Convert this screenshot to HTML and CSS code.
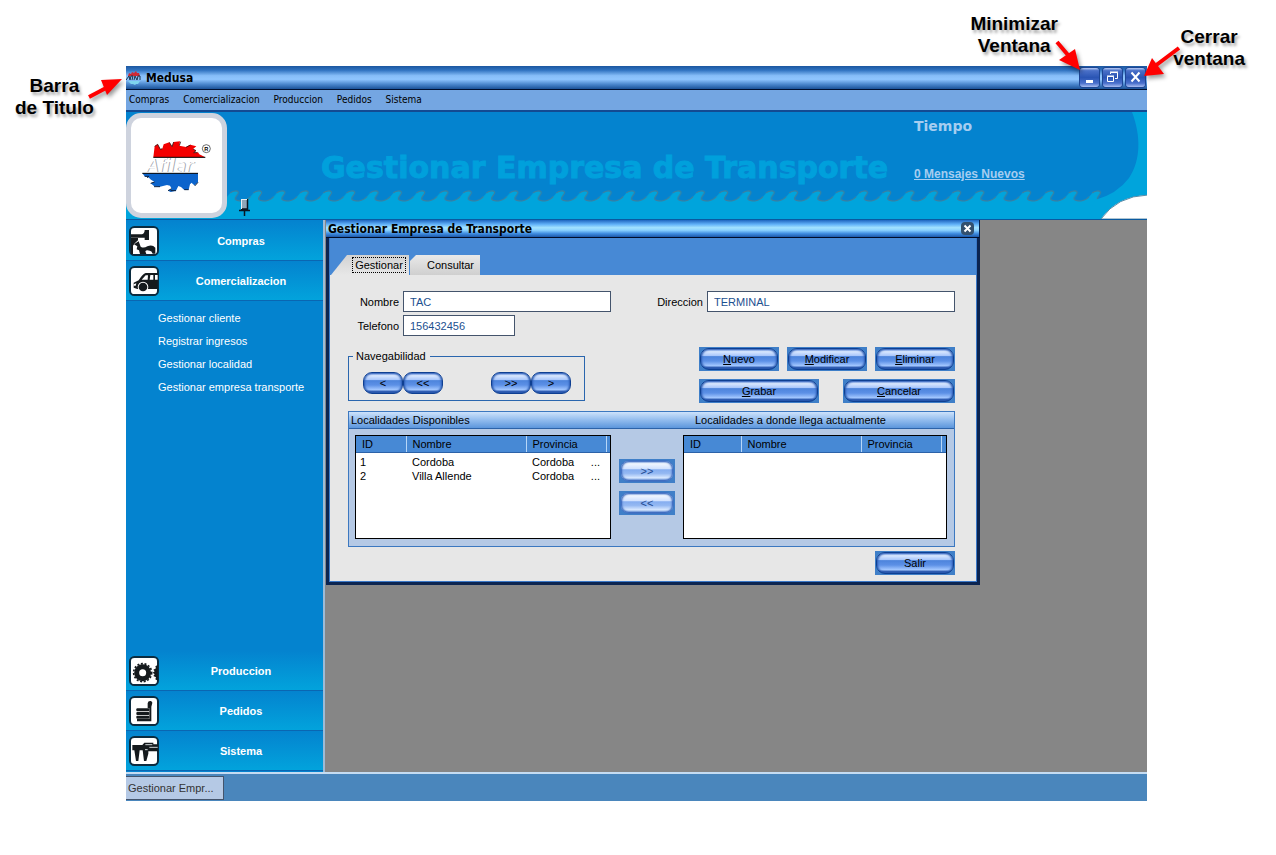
FILE: index.html
```html
<!DOCTYPE html>
<html lang="es">
<head>
<meta charset="utf-8">
<title>Medusa</title>
<link rel="stylesheet" href="styles.css">
</head>
<body>
<div class="stage">
  <div class="app">
    <header class="titlebar">
      <svg class="titlebar-icon" width="16" height="16" viewBox="0 0 16 16" aria-hidden="true">
        <path d="M2 6 3 3 5 4 6 2 8 3 10 1 11 3 13 3 14 6Z" fill="#d02a35"/>
        <path d="M0 10 3 6 4 10 5 6H7L6 10M8 10 9 6 11 10 12 6H14V10" fill="none" stroke="#1d3348"/>
        <path d="M2 11H14L12 14H10L9 15 7 14H5Z" fill="#7fd4ee"/>
      </svg>
      <h1 class="titlebar-text">Medusa</h1>
      <div class="window-buttons">
        <button class="window-button" aria-label="Minimizar"><svg width="19" height="19" viewBox="0 0 19 19"><path d="M6 12H13V15H6Z" fill="#fff"/></svg></button>
        <button class="window-button" aria-label="Restaurar"><svg width="19" height="19" viewBox="0 0 19 19" fill="none" stroke="#fff"><path d="M4.500 8.500H10.500V13.500H4.500ZM4 8H11M7.500 6V4.500H14.500V10.500H12M7 4H15"/></svg></button>
        <button class="window-button" aria-label="Cerrar"><svg width="19" height="19" viewBox="0 0 19 19" stroke="#fff" stroke-width="2"><path d="M5.500 4.500 13.500 13.500M13.500 4.500 5.500 13.500"/></svg></button>
      </div>
    </header>

    <nav class="menubar" aria-label="Principal">
      <a href="#compras">Compras</a>
      <a href="#comercializacion">Comercializacion</a>
      <a href="#produccion">Produccion</a>
      <a href="#pedidos">Pedidos</a>
      <a href="#sistema">Sistema</a>
    </nav>

    <div class="banner">
      <svg class="banner-waves" width="100%" height="29" aria-hidden="true">
        <defs>
          <pattern id="wave" width="23.300" height="29" patternUnits="userSpaceOnUse">
            <path d="M0 11C5 10 8 7 11 3C13 1 18 0 19 2C20 4 16 6 16 9C17 11 20 11 23.300 11V29H0Z" fill="#00a4dc"/>
            <path d="M11 3C13 1 18 0 19 2C20 4 16 6 16 9C17 11 20 11 23.300 11M0 11C3 10.500 6 9 8 6.500" fill="none" stroke="#3c7f9e" stroke-width="1.200"/>
          </pattern>
        </defs>
        <rect width="100%" height="29" fill="url(#wave)"/>
      </svg>
      <svg class="banner-corner" width="60" height="107" viewBox="0 0 60 107" aria-hidden="true">
        <path d="M45 0C54 24 54 48 42 66Q30 82 8 88L0 107H60V0Z" fill="#00a4dc"/>
        <path d="M14 107Q30 84 61 83V107Z" fill="#fff" stroke="#5c8ba6"/>
      </svg>
      <div class="logo">
        <svg width="74" height="56" viewBox="50 75 222 168" role="img" aria-label="Afilar">
          <path d="M90 133 94 100 103 94 111 109 117 107 121 94 138 88 146 101 151 87 170 85 168 98 188 102 201 95 219 100 209 108 218 113 211 119 224 118 228 124 246 133Z" fill="#f40000"/>
          <path d="M94 100 103 94 111 109 117 107M138 88 146 101 151 87M168 98 172 86M188 103 201 96M209 108 218 113 211 119 222 119" fill="none" stroke="#351010" stroke-width="2.500"/>
          <path d="M57 181H224L224 208 214 217 209 214 205 209 200 214 196 230 183 231 173 222 165 219 158 233 142 237 134 233 145 227 140 218 131 216 110 221 92 219 82 211 94 207 83 200 75 193 64 190Z" fill="#0c64cc"/>
          <path d="M64 190H77L71 194M82 211 94 207M110 221H92M134 233 145 227M158 233H142M196 230H183M224 208 214 219" fill="none" stroke="#0b2140" stroke-width="3"/>
          <text class="logo-shadow" x="72" y="178">Afilar</text>
          <text class="logo-name" x="69" y="176">Afilar</text>
          <path d="M90 133H246M57 181H224" stroke="#000" stroke-width="3"/>
          <circle cx="249" cy="107" r="12" fill="none" stroke="#222" stroke-width="2"/>
          <text class="logo-mark" x="243" y="113">R</text>
        </svg>
      </div>
      <svg class="pin" width="12" height="17" viewBox="0 0 12 17" aria-hidden="true">
        <path d="M2 1H9V10H2Z" fill="#8fa7b8"/><path d="M8.500 0V11M0 11.500H11M5.500 11V17M2 10H9" stroke="#0a1620" stroke-width="1.500"/><path d="M2.500 1V10M2 .5H8" stroke="#e8eef2"/>
      </svg>
      <h2 class="banner-title">Gestionar Empresa de Transporte</h2>
      <div class="banner-side">
        <p class="weather">Tiempo</p>
        <a class="messages" href="#mensajes">0 Mensajes Nuevos</a>
      </div>
    </div>

    <main class="workspace">
      <aside class="sidebar">
        <button class="section">
          <svg class="section-icon" viewBox="0 0 90 90" aria-hidden="true"><rect x="3" y="3" width="84" height="84" rx="13" fill="#fff" stroke="#0b2c40" stroke-width="6"/><path d="M6 25H39Q47 22 47 12H60V42H47V35H6Z" fill="#151a1d"/><path d="M6 36H27V43L18 51 12 59V84H6Z" fill="#151a1d"/><path d="M15 55 29 46 35 62Q44 68 55 61Q70 55 79 65V83H71Q68 74 62 74Q52 70 49 76L52 84H33L30 73 23 70 25 61Z" fill="#151a1d"/></svg>
          <span class="section-name">Compras</span>
        </button>
        <button class="section">
          <svg class="section-icon" viewBox="0 0 90 90" aria-hidden="true"><rect x="3" y="3" width="84" height="84" rx="13" fill="#fff" stroke="#0b2c40" stroke-width="6"/><path d="M86 21H50Q41 23 29 43L14 50V65L25 69H86Z" fill="#151a1d"/><path d="M50 28H57L56 41H38ZM64 27H73V41H62ZM78 27H86V41H78Z" fill="#fff"/><circle cx="42" cy="63" r="16" fill="#fff"/><circle cx="42" cy="63" r="13" fill="#151a1d"/><path d="M14 55 22 52 20 59H14Z" fill="#fff"/></svg>
          <span class="section-name">Comercializacion</span>
        </button>
        <nav class="links" aria-label="Comercializacion">
          <a href="#cliente">Gestionar cliente</a>
          <a href="#ingresos">Registrar ingresos</a>
          <a href="#localidad">Gestionar localidad</a>
          <a href="#transporte">Gestionar empresa transporte</a>
        </nav>
        <button class="section">
          <svg class="section-icon" viewBox="0 0 90 90" aria-hidden="true"><rect x="3" y="3" width="84" height="84" rx="13" fill="#fff" stroke="#0b2c40" stroke-width="6"/><circle cx="41" cy="50" r="18" fill="none" stroke="#151a1d" stroke-width="15"/><circle cx="41" cy="50" r="27" fill="none" stroke="#151a1d" stroke-width="5" stroke-dasharray="6 5"/><path d="M86 27 79 31 81 37 73 41 77 46 71 50 77 55 73 60 81 64 79 70 86 74Z" fill="#151a1d"/></svg>
          <span class="section-name">Produccion</span>
        </button>
        <button class="section">
          <svg class="section-icon" viewBox="0 0 90 90" aria-hidden="true"><rect x="3" y="3" width="84" height="84" rx="13" fill="#fff" stroke="#0b2c40" stroke-width="6"/><rect x="22" y="37" width="39" height="9" rx="3" fill="#151a1d"/><rect x="22" y="48" width="39" height="9" rx="3" fill="#151a1d"/><rect x="22" y="59" width="39" height="9" rx="3" fill="#151a1d"/><path d="M56 37V22Q57 14 65 15Q72 17 69 25L67 32V76H24V69H61V37Z" fill="#151a1d"/></svg>
          <span class="section-name">Pedidos</span>
        </button>
        <button class="section">
          <svg class="section-icon" viewBox="0 0 90 90" aria-hidden="true"><rect x="3" y="3" width="84" height="84" rx="13" fill="#fff" stroke="#0b2c40" stroke-width="6"/><path d="M10 27H40L46 20H73V25H86V46H58V53L52 75H45L41 43H32L28 75H21L16 43H10Z" fill="#151a1d"/><path d="M49 26H70M61 34H86M48 41H56" stroke="#cfd5d8" stroke-width="3"/></svg>
          <span class="section-name">Sistema</span>
        </button>
      </aside>

      <div class="desktop">
        <section class="child" aria-labelledby="child-title">
          <header class="child-bar">
            <h3 class="child-title" id="child-title">Gestionar Empresa de Transporte</h3>
            <button class="child-close" aria-label="Cerrar"><svg width="13" height="13" viewBox="0 0 13 13"><path d="M3.500 3.500 9.500 9.500M9.500 3.500 3.500 9.500" stroke="#fff" stroke-width="2"/></svg></button>
          </header>
          <div class="child-frame">
            <div class="tabs" role="tablist">
              <button class="tab tab-active" role="tab" aria-selected="true"><span class="tab-focus">Gestionar</span></button>
              <button class="tab" role="tab" aria-selected="false">Consultar</button>
            </div>
            <form class="form">
              <div class="fields">
                <label class="label" for="nombre">Nombre</label>
                <input class="input" id="nombre" value="TAC">
                <label class="label" for="direccion">Direccion</label>
                <input class="input" id="direccion" value="TERMINAL">
                <label class="label" for="telefono">Telefono</label>
                <input class="input input-short" id="telefono" value="156432456">
              </div>

              <div class="tools">
                <fieldset class="navigator">
                  <legend>Navegabilidad</legend>
                  <div class="navigator-row">
                    <div class="pair"><button type="button" class="pill">&lt;</button><button type="button" class="pill">&lt;&lt;</button></div>
                    <div class="pair"><button type="button" class="pill">&gt;&gt;</button><button type="button" class="pill">&gt;</button></div>
                  </div>
                </fieldset>
                <div class="actions">
                  <div class="actions-row">
                    <button type="button" class="button"><span class="pill"><span><u>N</u>uevo</span></span></button>
                    <button type="button" class="button"><span class="pill"><span><u>M</u>odificar</span></span></button>
                    <button type="button" class="button"><span class="pill"><span><u>E</u>liminar</span></span></button>
                  </div>
                  <div class="actions-row">
                    <button type="button" class="button button-wide"><span class="pill"><span><u>G</u>rabar</span></span></button>
                    <button type="button" class="button button-medium"><span class="pill"><span><u>C</u>ancelar</span></span></button>
                  </div>
                </div>
              </div>

              <section class="places">
                <header class="places-bar">
                  <h4>Localidades Disponibles</h4>
                  <h4>Localidades a donde llega actualmente</h4>
                </header>
                <div class="places-body">
                  <div class="list">
                    <table>
                      <colgroup><col class="col-id"><col class="col-name"><col class="col-province"><col></colgroup>
                      <thead><tr><th>ID</th><th>Nombre</th><th>Provincia</th><th></th></tr></thead>
                      <tbody>
                        <tr><td>1</td><td>Cordoba</td><td><span class="cell-cut">Cordoba<span>...</span></span></td><td></td></tr>
                        <tr><td>2</td><td>Villa Allende</td><td><span class="cell-cut">Cordoba<span>...</span></span></td><td></td></tr>
                      </tbody>
                    </table>
                  </div>
                  <div class="transfer">
                    <button type="button" class="button button-small" disabled><span class="pill">&gt;&gt;</span></button>
                    <button type="button" class="button button-small" disabled><span class="pill">&lt;&lt;</span></button>
                  </div>
                  <div class="list">
                    <table>
                      <colgroup><col class="col-id-wide"><col class="col-name"><col class="col-province"><col></colgroup>
                      <thead><tr><th>ID</th><th>Nombre</th><th>Provincia</th><th></th></tr></thead>
                    </table>
                  </div>
                </div>
              </section>

              <div class="footer">
                <button type="button" class="button"><span class="pill">Salir</span></button>
              </div>
            </form>
          </div>
        </section>
      </div>
    </main>

    <footer class="taskbar">
      <button class="task">Gestionar Empr...</button>
    </footer>
  </div>

  <p class="note note-title">Barra<br>de Titulo</p>
  <p class="note note-minimize">Minimizar<br>Ventana</p>
  <p class="note note-close">Cerrar<br>ventana</p>
  <svg class="arrow arrow-title" width="40" height="24" viewBox="0 0 40 24" aria-hidden="true"><path d="M3 20 22 10" stroke="#f00" stroke-width="4"/><path d="M36 2 15 3 21 18Z" fill="#f00"/></svg>
  <svg class="arrow arrow-buttons" width="130" height="40" viewBox="0 0 130 40" aria-hidden="true"><path d="M7 2 18 15M129 8 105 26" stroke="#f00" stroke-width="4"/><path d="M30 30 9 20 25 9ZM94 36 102 18 114 34Z" fill="#f00"/></svg>
</div>
</body>
</html>
```
FILE: styles.css
```css
* {
  box-sizing: border-box;
}

body {
  margin: 0;
  background: #fff;
  color: #000;
  font: 11px/14px "Liberation Sans", Arial, sans-serif;
}

h1, h2, h3, h4, p {
  margin: 0;
}

button, input {
  font: inherit;
  color: inherit;
}

button {
  padding: 0;
  border: 0;
  background: none;
}

.stage {
  position: relative;
  min-height: 100vh;
  padding: 66px 129px 54px 126px;
}

.app {
  display: flex;
  flex-direction: column;
  min-height: calc(100vh - 120px);
}

/* Main window bars */

.titlebar {
  display: flex;
  align-items: center;
  height: 24px;
  padding-right: 2px;
  border-bottom: 1px solid #001030;
  background: linear-gradient(#1c57a0, #2f72c0 18%, #86bdf8 42%, #8fc5fe 58%, #4a86cc 80%, #1b5298);
}

.titlebar-icon {
  margin-right: 4px;
}

.titlebar-text {
  font: bold 12px/16px "DejaVu Sans Condensed", "DejaVu Sans", sans-serif;
}

.window-buttons {
  display: flex;
  gap: 4px;
  margin-left: auto;
}

.window-button {
  width: 19px;
  height: 19px;
  border-radius: 3px;
  background: linear-gradient(#b9cdf6, #4a70c8 14%, #2a55b4 50%, #4a70cc 80%, #a9bdf0);
  box-shadow: 0 0 0 1px #1d4694;
}

.window-button svg {
  display: block;
}

.menubar {
  display: flex;
  align-items: center;
  gap: 14px;
  height: 22px;
  padding: 0 3px;
  border-bottom: 2px solid #134a92;
  background: #74a6e2;
}

.menubar a {
  color: #000;
  font: 10px/14px "DejaVu Sans Condensed", "DejaVu Sans", sans-serif;
  text-decoration: none;
}

/* Banner */

.banner {
  position: relative;
  display: flex;
  height: 108px;
  padding-top: 1px;
  border-bottom: 1px solid #0a5aa0;
  background: #0483cf;
}

.banner-waves {
  position: absolute;
  bottom: 0;
  left: 0;
}

.banner-corner {
  position: absolute;
  right: 0;
  bottom: 0;
}

.logo {
  position: relative;
  display: flex;
  align-items: center;
  justify-content: center;
  width: 101px;
  height: 105px;
  border: 5px solid #ced3de;
  border-radius: 15px;
  background: #fff;
}

.logo-name, .logo-shadow {
  font: italic 54px "DejaVu Sans", sans-serif;
}

.logo-name {
  fill: #fff;
}

.logo-shadow {
  fill: #a4a8b0;
}

.logo-mark {
  font: bold 17px "Liberation Sans", Arial, sans-serif;
}

.pin {
  position: relative;
  align-self: flex-end;
  margin: 0 0 3px 12px;
}

.banner-title {
  position: relative;
  flex: 1;
  padding: 37px 0 0 70px;
  color: #00a0dc;
  font: bold 30px/36px "DejaVu Sans", sans-serif;
  white-space: nowrap;
  -webkit-text-stroke: 1px #00a0dc;
}

.banner-side {
  position: relative;
  display: flex;
  flex-direction: column;
  align-items: flex-start;
  gap: 32px;
  width: 233px;
  padding-top: 5px;
  color: #a6cdf0;
}

.weather {
  font: bold 14px/16px "DejaVu Sans", sans-serif;
}

.messages {
  color: inherit;
  font: bold 12px/16px "Liberation Sans", Arial, sans-serif;
}

/* Workspace */

.workspace {
  display: flex;
  flex: 1;
}

.sidebar {
  display: flex;
  flex-direction: column;
  width: 199px;
  padding: 1px 0;
  border-right: 2px solid #9dbbd6;
  background: #0483cf;
}

.section {
  display: flex;
  align-items: center;
  height: 40px;
  padding-left: 3px;
  border-bottom: 1px solid #0a66b2;
  background: linear-gradient(#0483cf, #02a3dc);
  color: #fff;
}

.section-icon {
  width: 30px;
  height: 30px;
}

.section-name {
  flex: 1;
  font-weight: bold;
}

.links {
  display: flex;
  flex: 1;
  flex-direction: column;
  gap: 9px;
  padding: 10px 0 0 32px;
}

.links a {
  color: #fff;
  text-decoration: none;
}

.desktop {
  flex: 1;
  padding-left: 1px;
  background: #868686;
}

.child {
  width: 654px;
  max-width: 100%;
}

.child-bar {
  display: flex;
  align-items: center;
  justify-content: space-between;
  height: 18px;
  padding: 0 5px 0 2px;
  border-right: 1px solid #06204a;
  border-bottom: 1px solid #000c28;
  background: linear-gradient(#1f66c0, #5fb0f8 25%, #a2e2ff 45%, #8ad2ff 60%, #3f8ce0 80%, #1c58a8);
}

.child-title {
  font: bold 12px/16px "DejaVu Sans Condensed", "DejaVu Sans", sans-serif;
}

.child-close {
  width: 13px;
  height: 13px;
  border-radius: 4px;
  background: #33506e;
}

.child-close svg {
  display: block;
}

.child-frame {
  padding: 0 1px 1px;
  border: solid #0b2450;
  border-width: 0 3px 3px;
  background: #3a78c8;
}

.tabs {
  display: flex;
  align-items: flex-end;
  gap: 1px;
  height: 37px;
  padding-left: 1px;
  background: #4789d5;
}

.tab {
  width: 70px;
  height: 20px;
  padding-left: 11px;
  background: linear-gradient(#e9e9e9, #cfcfcf);
  clip-path: polygon(0 6px, 6px 0, 100% 0, 100% 100%, 0 100%);
}

.tab-active {
  width: 78px;
  padding-left: 21px;
  background: linear-gradient(#d2d2d2, #e7e7e7);
  clip-path: polygon(0 100%, 16px 0, 100% 0, 100% 100%);
}

.tab-focus {
  display: block;
  width: 54px;
  border: 1px dotted #000;
}

.form {
  padding: 16px 21px 6px 18px;
  background: #e7e7e7;
}

.fields {
  display: grid;
  grid-template-columns: 51px minmax(0, 208px) minmax(0, 1fr) minmax(0, 248px);
  gap: 3px 4px;
  align-items: center;
}

.label {
  text-align: right;
}

.input {
  width: 100%;
  height: 21px;
  padding: 0 6px;
  border: 1px solid #44546c;
  border-radius: 0;
  background: #fff;
  color: #1c5090;
}

.input-short {
  width: 112px;
}

.tools {
  display: flex;
  justify-content: space-between;
  align-items: flex-start;
  margin-top: 11px;
}

.navigator {
  width: 237px;
  margin: 2px 0 0;
  padding: 9px 13px 6px 14px;
  border: 1px solid #2a66ae;
}

.navigator legend {
  margin-left: -10px;
  padding: 0 4px 0 3px;
}

.navigator-row {
  display: flex;
  justify-content: space-between;
}

.pair {
  display: flex;
}

.pill {
  display: flex;
  align-items: center;
  justify-content: center;
  width: 100%;
  height: 22px;
  border: 1px solid #0e3f92;
  border-radius: 9px;
  background: linear-gradient(#8fb2f6, #dbe9ff 12%, #a8c6fb 34%, #4d84dc 38%, #5c90e6 60%, #a4c8ff 84%, #3560b4 92%, #174494);
  box-shadow: inset 0 0 2px 1px #2c5cb4;
}

.pair .pill {
  width: 40px;
}

.button {
  width: 80px;
  height: 24px;
  padding: 1px;
  background: #3f7fc8;
}

.button-wide {
  width: 120px;
}

.button-medium {
  width: 112px;
}

.button-small {
  width: 56px;
}

.button:disabled .pill {
  border-color: #3d72c4;
  background: linear-gradient(#a8c4f8, #f2f7ff 12%, #d2e2ff 38%, #86aef0 44%, #94b8f2 62%, #d8e8ff 84%, #6a94dc);
  color: #234c94;
}

.actions {
  display: flex;
  flex-direction: column;
  gap: 8px;
  width: 256px;
}

.actions-row {
  display: flex;
  justify-content: space-between;
}

.places {
  margin-top: 8px;
  border: 1px solid #3c78c0;
  background: #b5c9e5;
}

.places-bar {
  display: grid;
  grid-template-columns: 344px 1fr;
  height: 17px;
  padding: 1px 2px;
  border-bottom: 1px solid #2c62a8;
  background: linear-gradient(#cde2fb, #92bcee 50%, #5c96dc);
}

.places-bar h4 {
  font-weight: normal;
}

.places-body {
  display: grid;
  grid-template-columns: minmax(0, 256px) 56px minmax(0, 264px);
  justify-content: space-between;
  padding: 6px 7px 7px 6px;
}

.list {
  height: 104px;
  border: 1px solid #000;
  background: #fff;
}

.list table {
  width: 100%;
  border-collapse: collapse;
  table-layout: fixed;
}

.col-id {
  width: 50px;
}

.col-id-wide {
  width: 57px;
}

.col-name {
  width: 120px;
}

.col-province {
  width: 80px;
}

.list th {
  height: 16px;
  padding: 1px 6px 0;
  border-right: 1px solid #b6d6f8;
  border-bottom: 1px solid #2c62a8;
  background: #4789d5;
  font-weight: normal;
  text-align: left;
}

.list th:last-child {
  padding: 0;
  border-right: 0;
}

.list td {
  padding: 0 6px;
  white-space: nowrap;
}

.list td:first-child {
  padding-left: 4px;
}

.list td:last-child {
  padding: 0;
}

.list tbody::before {
  display: block;
  height: 2px;
  content: "";
}

.cell-cut {
  display: flex;
  justify-content: space-between;
}

.transfer {
  display: flex;
  flex-direction: column;
  gap: 8px;
  padding-top: 24px;
}

.footer {
  display: flex;
  justify-content: flex-end;
  margin-top: 4px;
}

/* Task bar */

.taskbar {
  height: 29px;
  padding-top: 2px;
  border-top: 2px solid #c5dcf2;
  background: #4a86bc;
}

.task {
  width: 98px;
  height: 24px;
  padding-left: 2px;
  border: 1px solid #44546c;
  border-left: 0;
  background: #b5c9e5;
  color: #333;
  text-align: left;
}

/* Callouts over the window */

.note {
  position: absolute;
  font: bold 19px/22px "Liberation Sans", Arial, sans-serif;
  text-align: center;
  text-shadow: 2px 3px 3px #aaa;
}

.note-title {
  top: 75px;
  left: 15px;
}

.note-minimize {
  top: 13px;
  right: 218px;
}

.note-close {
  top: 26px;
  right: 31px;
}

.arrow {
  position: absolute;
  overflow: visible;
  filter: drop-shadow(2px 3px 2px rgba(0, 0, 0, .4));
}

.arrow-title {
  top: 77px;
  left: 86px;
}

.arrow-buttons {
  top: 40px;
  right: 96px;
}
```
